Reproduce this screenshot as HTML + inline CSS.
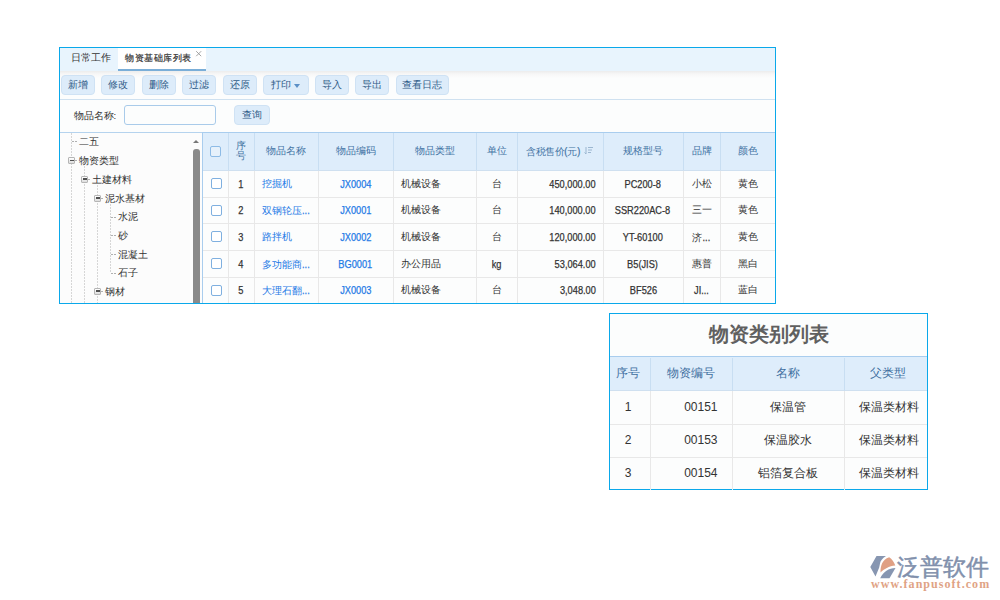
<!DOCTYPE html>
<html><head><meta charset="utf-8">
<style>
*{box-sizing:border-box;margin:0;padding:0}
html,body{width:1000px;height:600px;overflow:hidden;background:#fff;font-family:"Liberation Sans",sans-serif;color:#333}
.a{position:absolute}
.panel{left:59px;top:47px;width:717px;height:257px;border:1px solid #0aa8ea;background:#fcfdfd}
.tabbar{left:60px;top:48px;width:715px;height:23px;background:#e8f4fd}
.tab{font-size:9.6px;line-height:12px;white-space:nowrap;color:#333}
.toolbar{left:60px;top:71px;width:715px;height:29px;background:linear-gradient(#ececec,#f7f7f7 3px,#fcfdfd 7px);border-bottom:1px solid #cfe1f0}
.btn{top:75px;height:20px;background:#ddecfa;border:1px solid #cfe2f4;border-radius:4px;font-size:9.6px;line-height:18px;text-align:center;color:#2f5b87;white-space:nowrap}
.srow{left:60px;top:100px;width:715px;height:33px;background:#fcfdfd;border-bottom:1px solid #b5d3ee}
.tree{left:60px;top:133px;width:142px;height:170px;background:#fcfcfc;overflow:hidden}
.ti{font-size:9.6px;line-height:12px;white-space:nowrap;color:#333}
.vl{width:1px;background:repeating-linear-gradient(#d6d6d6 0 2px,transparent 2px 3px)}
.hl{height:1px;background:repeating-linear-gradient(90deg,#b0b0b0 0 2px,transparent 2px 3px)}
.box{width:7px;height:7px;border:1px solid #b5b5b5;background:linear-gradient(#fff,#dcdcdc);border-radius:1px}
.box:after{content:"";position:absolute;left:0.5px;top:1.7px;width:4px;height:1.6px;background:#505050}
.gh{left:202px;top:132px;width:573px;height:39px;background:#deedfb;border-top:1px solid #a9cdee;border-bottom:1px solid #cfe0f0;border-left:1px solid #a9cdee}
.gtxt{font-size:9.6px;line-height:12px;color:#4373a3;white-space:nowrap;text-align:center}
.cb{width:11px;height:11px;border:1px solid #7fb0e0;border-radius:2px;background:#fff}
.cell{font-size:9.6px;line-height:12px;white-space:nowrap;color:#333}
.lnk{color:#1f7ae6}
.n{display:inline-block;font-size:10.5px;transform:scaleX(.88);-webkit-text-stroke:0.25px currentColor}
.t2{font-size:12px;line-height:14px;color:#333;white-space:nowrap}
</style></head><body>
<div class="a panel"></div>
<div class="a tabbar"></div>
<div class="a tab" style="left:70.5px;top:52px;">日常工作</div>
<div class="a" style="left:118px;top:48px;width:88px;height:23px;background:#fff;border-bottom:2px solid #7aaed8"></div>
<div class="a tab" style="left:125px;top:51.6px;font-size:9.45px;letter-spacing:0.5px;-webkit-text-stroke:0.2px #333">物资基础库列表</div>
<svg class="a" style="left:195px;top:50px" width="8" height="8" viewBox="0 0 8 8"><path d="M1.2 1.2L6.2 6.2M6.2 1.2L1.2 6.2" stroke="#999" stroke-width="0.9"/></svg>
<div class="a toolbar"></div>
<div class="a btn" style="left:61px;width:34px">新增</div>
<div class="a btn" style="left:101.2px;width:34.3px">修改</div>
<div class="a btn" style="left:141.5px;width:34.3px">删除</div>
<div class="a btn" style="left:182px;width:34.3px">过滤</div>
<div class="a btn" style="left:222.5px;width:34px">还原</div>
<div class="a btn" style="left:263px;width:46px;text-align:left;padding-left:7px">打印<span class="a" style="left:29.5px;top:7.5px;width:0;height:0;border-left:3.5px solid transparent;border-right:3.5px solid transparent;border-top:4.5px solid #5b8fc6"></span></div>
<div class="a btn" style="left:315px;width:34px">导入</div>
<div class="a btn" style="left:355.2px;width:34px">导出</div>
<div class="a btn" style="left:395.5px;width:53.3px">查看日志</div>
<div class="a srow"></div>
<div class="a ti" style="left:73.5px;top:110px">物品名称:</div>
<div class="a" style="left:124px;top:105px;width:92px;height:20px;border:1px solid #a9cbea;border-radius:3px;background:#fcfdfd"></div>
<div class="a btn" style="left:234px;top:105px;width:35.5px">查询</div>
<div class="a tree"></div>
<div class="a vl" style="left:71px;top:133px;height:170px"></div>
<div class="a vl" style="left:84px;top:166px;height:137px"></div>
<div class="a vl" style="left:97px;top:185px;height:118px"></div>
<div class="a vl" style="left:110px;top:204px;height:69px"></div>
<div class="a hl" style="left:72px;top:141.3px;width:6px"></div>
<div class="a ti" style="left:78.5px;top:135.8px">二五</div>
<div class="a box" style="left:68px;top:156.9px"></div>
<div class="a hl" style="left:75px;top:160.4px;width:3px"></div>
<div class="a ti" style="left:78.5px;top:154.9px">物资类型</div>
<div class="a box" style="left:81px;top:175.8px"></div>
<div class="a hl" style="left:88px;top:179.3px;width:3px"></div>
<div class="a ti" style="left:91.5px;top:173.8px">土建材料</div>
<div class="a box" style="left:94px;top:194.5px"></div>
<div class="a hl" style="left:101px;top:198px;width:3px"></div>
<div class="a ti" style="left:104.5px;top:192.5px">泥水基材</div>
<div class="a hl" style="left:111px;top:216.5px;width:6px"></div>
<div class="a ti" style="left:117.5px;top:211.0px">水泥</div>
<div class="a hl" style="left:111px;top:235px;width:6px"></div>
<div class="a ti" style="left:117.5px;top:229.5px">砂</div>
<div class="a hl" style="left:111px;top:254px;width:6px"></div>
<div class="a ti" style="left:117.5px;top:248.5px">混凝土</div>
<div class="a hl" style="left:111px;top:272.6px;width:6px"></div>
<div class="a ti" style="left:117.5px;top:267.1px">石子</div>
<div class="a box" style="left:94px;top:287.5px"></div>
<div class="a hl" style="left:101px;top:291px;width:3px"></div>
<div class="a ti" style="left:104.5px;top:285.5px">钢材</div>
<div class="a" style="left:193px;top:140px;width:0;height:0;border-left:3.5px solid transparent;border-right:3.5px solid transparent;border-bottom:3.5px solid #777"></div>
<div class="a" style="left:193px;top:149px;width:6.5px;height:154px;z-index:0;background:#8a8a8a;border-radius:3px 3px 0 0"></div>
<div class="a gh"></div>
<div class="a" style="left:228.4px;top:133px;width:1px;height:37px;background:#c8def2"></div>
<div class="a" style="left:228.4px;top:171px;width:1px;height:132px;background:#e8e8e8"></div>
<div class="a" style="left:254px;top:133px;width:1px;height:37px;background:#c8def2"></div>
<div class="a" style="left:254px;top:171px;width:1px;height:132px;background:#e8e8e8"></div>
<div class="a" style="left:318px;top:133px;width:1px;height:37px;background:#c8def2"></div>
<div class="a" style="left:318px;top:171px;width:1px;height:132px;background:#e8e8e8"></div>
<div class="a" style="left:393px;top:133px;width:1px;height:37px;background:#c8def2"></div>
<div class="a" style="left:393px;top:171px;width:1px;height:132px;background:#e8e8e8"></div>
<div class="a" style="left:476px;top:133px;width:1px;height:37px;background:#c8def2"></div>
<div class="a" style="left:476px;top:171px;width:1px;height:132px;background:#e8e8e8"></div>
<div class="a" style="left:517px;top:133px;width:1px;height:37px;background:#c8def2"></div>
<div class="a" style="left:517px;top:171px;width:1px;height:132px;background:#e8e8e8"></div>
<div class="a" style="left:603px;top:133px;width:1px;height:37px;background:#c8def2"></div>
<div class="a" style="left:603px;top:171px;width:1px;height:132px;background:#e8e8e8"></div>
<div class="a" style="left:683px;top:133px;width:1px;height:37px;background:#c8def2"></div>
<div class="a" style="left:683px;top:171px;width:1px;height:132px;background:#e8e8e8"></div>
<div class="a" style="left:720px;top:133px;width:1px;height:37px;background:#c8def2"></div>
<div class="a" style="left:720px;top:171px;width:1px;height:132px;background:#e8e8e8"></div>
<div class="a" style="left:202px;top:170px;width:1px;height:133px;background:#a9cdee"></div>
<div class="a" style="left:203px;top:197.3px;width:572px;height:1px;background:#e8e8e8"></div>
<div class="a" style="left:203px;top:223.3px;width:572px;height:1px;background:#e8e8e8"></div>
<div class="a" style="left:203px;top:250.4px;width:572px;height:1px;background:#e8e8e8"></div>
<div class="a" style="left:203px;top:277.4px;width:572px;height:1px;background:#e8e8e8"></div>
<div class="a cb" style="left:210px;top:146px;border-color:#8dbbe6;background:#e6f1fb"></div>
<div class="a gtxt" style="left:228.4px;top:141px;width:26px;line-height:10.3px">序<br>号</div>
<div class="a gtxt" style="left:254.5px;top:145px;width:63.5px">物品名称</div>
<div class="a gtxt" style="left:318px;top:145px;width:75px">物品编码</div>
<div class="a gtxt" style="left:393px;top:145px;width:83.5px">物品类型</div>
<div class="a gtxt" style="left:476.5px;top:145px;width:41.0px">单位</div>
<div class="a gtxt" style="left:603px;top:145px;width:80px">规格型号</div>
<div class="a gtxt" style="left:683px;top:145px;width:37px">品牌</div>
<div class="a gtxt" style="left:720px;top:145px;width:55px">颜色</div>
<div class="a gtxt" style="left:526px;top:144.6px;text-align:left;letter-spacing:-0.45px">含税售价<span class="n" style="transform-origin:center">(</span>元<span class="n" style="transform-origin:center">)</span></div>
<svg class="a" style="left:584px;top:146px" width="10" height="9" viewBox="0 0 10 9"><path d="M2 1v7M0.5 6.5L2 8" stroke="#9bb6d0" stroke-width="1" fill="none"/><path d="M4 1.5h5M4 4h4M4 6.5h3" stroke="#9bb6d0" stroke-width="1"/></svg>
<div class="a cb" style="left:210.5px;top:178.4px"></div>
<div class="a cell" style="left:228.4px;top:177.9px;width:26px;text-align:center"><span class="n" style="transform-origin:center">1</span></div>
<div class="a cell lnk" style="left:262px;top:177.9px">挖掘机</div>
<div class="a cell lnk" style="left:318px;top:177.9px;width:75px;text-align:center"><span class="n" style="transform-origin:center">JX0004</span></div>
<div class="a cell" style="left:400.5px;top:177.9px">机械设备</div>
<div class="a cell" style="left:476.5px;top:177.9px;width:41px;text-align:center">台</div>
<div class="a cell" style="left:517.5px;top:177.9px;width:78px;text-align:right"><span class="n" style="transform-origin:right">450,000.00</span></div>
<div class="a cell" style="left:603px;top:177.9px;width:80px;text-align:center"><span class="n" style="transform-origin:center">PC200-8</span></div>
<div class="a cell" style="left:683px;top:177.9px;width:37px;text-align:center">小松</div>
<div class="a cell" style="left:720px;top:177.9px;width:55px;text-align:center">黄色</div>
<div class="a cb" style="left:210.5px;top:204.8px"></div>
<div class="a cell" style="left:228.4px;top:204.3px;width:26px;text-align:center"><span class="n" style="transform-origin:center">2</span></div>
<div class="a cell lnk" style="left:262px;top:204.3px">双钢轮压<span class="n" style="transform-origin:left">...</span></div>
<div class="a cell lnk" style="left:318px;top:204.3px;width:75px;text-align:center"><span class="n" style="transform-origin:center">JX0001</span></div>
<div class="a cell" style="left:400.5px;top:204.3px">机械设备</div>
<div class="a cell" style="left:476.5px;top:204.3px;width:41px;text-align:center">台</div>
<div class="a cell" style="left:517.5px;top:204.3px;width:78px;text-align:right"><span class="n" style="transform-origin:right">140,000.00</span></div>
<div class="a cell" style="left:603px;top:204.3px;width:80px;text-align:center"><span class="n" style="transform-origin:center">SSR220AC-8</span></div>
<div class="a cell" style="left:683px;top:204.3px;width:37px;text-align:center">三一</div>
<div class="a cell" style="left:720px;top:204.3px;width:55px;text-align:center">黄色</div>
<div class="a cb" style="left:210.5px;top:231.35000000000002px"></div>
<div class="a cell" style="left:228.4px;top:230.85000000000002px;width:26px;text-align:center"><span class="n" style="transform-origin:center">3</span></div>
<div class="a cell lnk" style="left:262px;top:230.85000000000002px">路拌机</div>
<div class="a cell lnk" style="left:318px;top:230.85000000000002px;width:75px;text-align:center"><span class="n" style="transform-origin:center">JX0002</span></div>
<div class="a cell" style="left:400.5px;top:230.85000000000002px">机械设备</div>
<div class="a cell" style="left:476.5px;top:230.85000000000002px;width:41px;text-align:center">台</div>
<div class="a cell" style="left:517.5px;top:230.85000000000002px;width:78px;text-align:right"><span class="n" style="transform-origin:right">120,000.00</span></div>
<div class="a cell" style="left:603px;top:230.85000000000002px;width:80px;text-align:center"><span class="n" style="transform-origin:center">YT-60100</span></div>
<div class="a cell" style="left:683px;top:230.85000000000002px;width:37px;text-align:center">济<span class="n" style="transform-origin:center">...</span></div>
<div class="a cell" style="left:720px;top:230.85000000000002px;width:55px;text-align:center">黄色</div>
<div class="a cb" style="left:210.5px;top:258.4px"></div>
<div class="a cell" style="left:228.4px;top:257.9px;width:26px;text-align:center"><span class="n" style="transform-origin:center">4</span></div>
<div class="a cell lnk" style="left:262px;top:257.9px">多功能商<span class="n" style="transform-origin:left">...</span></div>
<div class="a cell lnk" style="left:318px;top:257.9px;width:75px;text-align:center"><span class="n" style="transform-origin:center">BG0001</span></div>
<div class="a cell" style="left:400.5px;top:257.9px">办公用品</div>
<div class="a cell" style="left:476.5px;top:257.9px;width:41px;text-align:center"><span class="n" style="transform-origin:center">kg</span></div>
<div class="a cell" style="left:517.5px;top:257.9px;width:78px;text-align:right"><span class="n" style="transform-origin:right">53,064.00</span></div>
<div class="a cell" style="left:603px;top:257.9px;width:80px;text-align:center"><span class="n" style="transform-origin:center">B5(JIS)</span></div>
<div class="a cell" style="left:683px;top:257.9px;width:37px;text-align:center">惠普</div>
<div class="a cell" style="left:720px;top:257.9px;width:55px;text-align:center">黑白</div>
<div class="a cb" style="left:210.5px;top:284.7px"></div>
<div class="a cell" style="left:228.4px;top:284.2px;width:26px;text-align:center"><span class="n" style="transform-origin:center">5</span></div>
<div class="a cell lnk" style="left:262px;top:284.2px">大理石翻<span class="n" style="transform-origin:left">...</span></div>
<div class="a cell lnk" style="left:318px;top:284.2px;width:75px;text-align:center"><span class="n" style="transform-origin:center">JX0003</span></div>
<div class="a cell" style="left:400.5px;top:284.2px">机械设备</div>
<div class="a cell" style="left:476.5px;top:284.2px;width:41px;text-align:center">台</div>
<div class="a cell" style="left:517.5px;top:284.2px;width:78px;text-align:right"><span class="n" style="transform-origin:right">3,048.00</span></div>
<div class="a cell" style="left:603px;top:284.2px;width:80px;text-align:center"><span class="n" style="transform-origin:center">BF526</span></div>
<div class="a cell" style="left:683px;top:284.2px;width:37px;text-align:center"><span class="n" style="transform-origin:center">JI...</span></div>
<div class="a cell" style="left:720px;top:284.2px;width:55px;text-align:center">蓝白</div>
<div class="a" style="left:609px;top:313px;width:319px;height:177px;border:1px solid #0aa8ea;background:#fcfdfd"></div>
<div class="a" style="left:610px;top:314px;width:317px;height:43px;font-size:20px;font-weight:bold;color:#606060;text-align:center;line-height:41px">物资类别列表</div>
<div class="a" style="left:610px;top:356px;width:317px;height:35px;background:#deedfb;border-top:1px solid #a9cdee;border-bottom:1px solid #cfe0f0"></div>
<div class="a" style="left:650px;top:357.5px;width:1px;height:33px;background:#c8def2"></div>
<div class="a" style="left:650px;top:390.5px;width:1px;height:99px;background:#e8e8e8"></div>
<div class="a" style="left:732px;top:357.5px;width:1px;height:33px;background:#c8def2"></div>
<div class="a" style="left:732px;top:390.5px;width:1px;height:99px;background:#e8e8e8"></div>
<div class="a" style="left:843.5px;top:357.5px;width:1px;height:33px;background:#c8def2"></div>
<div class="a" style="left:843.5px;top:390.5px;width:1px;height:99px;background:#e8e8e8"></div>
<div class="a" style="left:610px;top:423.5px;width:317px;height:1px;background:#e8e8e8"></div>
<div class="a" style="left:610px;top:456.5px;width:317px;height:1px;background:#e8e8e8"></div>
<div class="a t2" style="left:609px;top:366px;width:37px;text-align:center;color:#3f6f9f">序号</div>
<div class="a t2" style="left:650px;top:366px;width:82px;text-align:center;color:#3f6f9f">物资编号</div>
<div class="a t2" style="left:732px;top:366px;width:111.5px;text-align:center;color:#3f6f9f">名称</div>
<div class="a t2" style="left:843.5px;top:366px;width:89.5px;text-align:center;color:#3f6f9f">父类型</div>
<div class="a t2" style="left:609px;top:400.0px;width:38px;text-align:center">1</div>
<div class="a t2" style="left:650px;top:400.0px;width:67.5px;text-align:right">00151</div>
<div class="a t2" style="left:732.5px;top:400.0px;width:111px;text-align:center">保温管</div>
<div class="a t2" style="left:858.5px;top:400.0px">保温类材料</div>
<div class="a t2" style="left:609px;top:433.0px;width:38px;text-align:center">2</div>
<div class="a t2" style="left:650px;top:433.0px;width:67.5px;text-align:right">00153</div>
<div class="a t2" style="left:732.5px;top:433.0px;width:111px;text-align:center">保温胶水</div>
<div class="a t2" style="left:858.5px;top:433.0px">保温类材料</div>
<div class="a t2" style="left:609px;top:466.0px;width:38px;text-align:center">3</div>
<div class="a t2" style="left:650px;top:466.0px;width:67.5px;text-align:right">00154</div>
<div class="a t2" style="left:732.5px;top:466.0px;width:111px;text-align:center">铝箔复合板</div>
<div class="a t2" style="left:858.5px;top:466.0px">保温类材料</div>
<svg class="a" style="left:866px;top:552px" width="34" height="30" viewBox="866 552 34 30">
<path d="M876.5 556 L886 556 Q880.5 559.5 880 563.5 L879.2 567.5 L875.5 576.5 L870.3 567 Z" fill="#8796b1"/>
<path d="M880.5 572.5 C880.5 566 882 559.5 889.2 557.2 C892 559 894 562 895.3 565.5 C889 566 884 569 880.5 572.5 Z" fill="#e0a084"/>
<path d="M880.2 578.3 L889.5 578.3 L895.5 568 C889 568 883 572 880.2 578.3 Z" fill="#8796b1"/>
</svg>
<div class="a" style="left:897px;top:553px;font-size:23px;line-height:28px;color:#8190ac;white-space:nowrap;-webkit-text-stroke:0.5px #8190ac">泛普软件</div>
<div class="a" style="left:871px;top:577px;font-family:'Liberation Serif',serif;font-size:12px;font-weight:bold;letter-spacing:1.05px;line-height:14px;color:#dfa385;white-space:nowrap">www.fanpusoft.com</div>
<div class="a" style="left:59px;top:47px;width:717px;height:257px;border:1px solid #0aa8ea;pointer-events:none"></div>
</body></html>
